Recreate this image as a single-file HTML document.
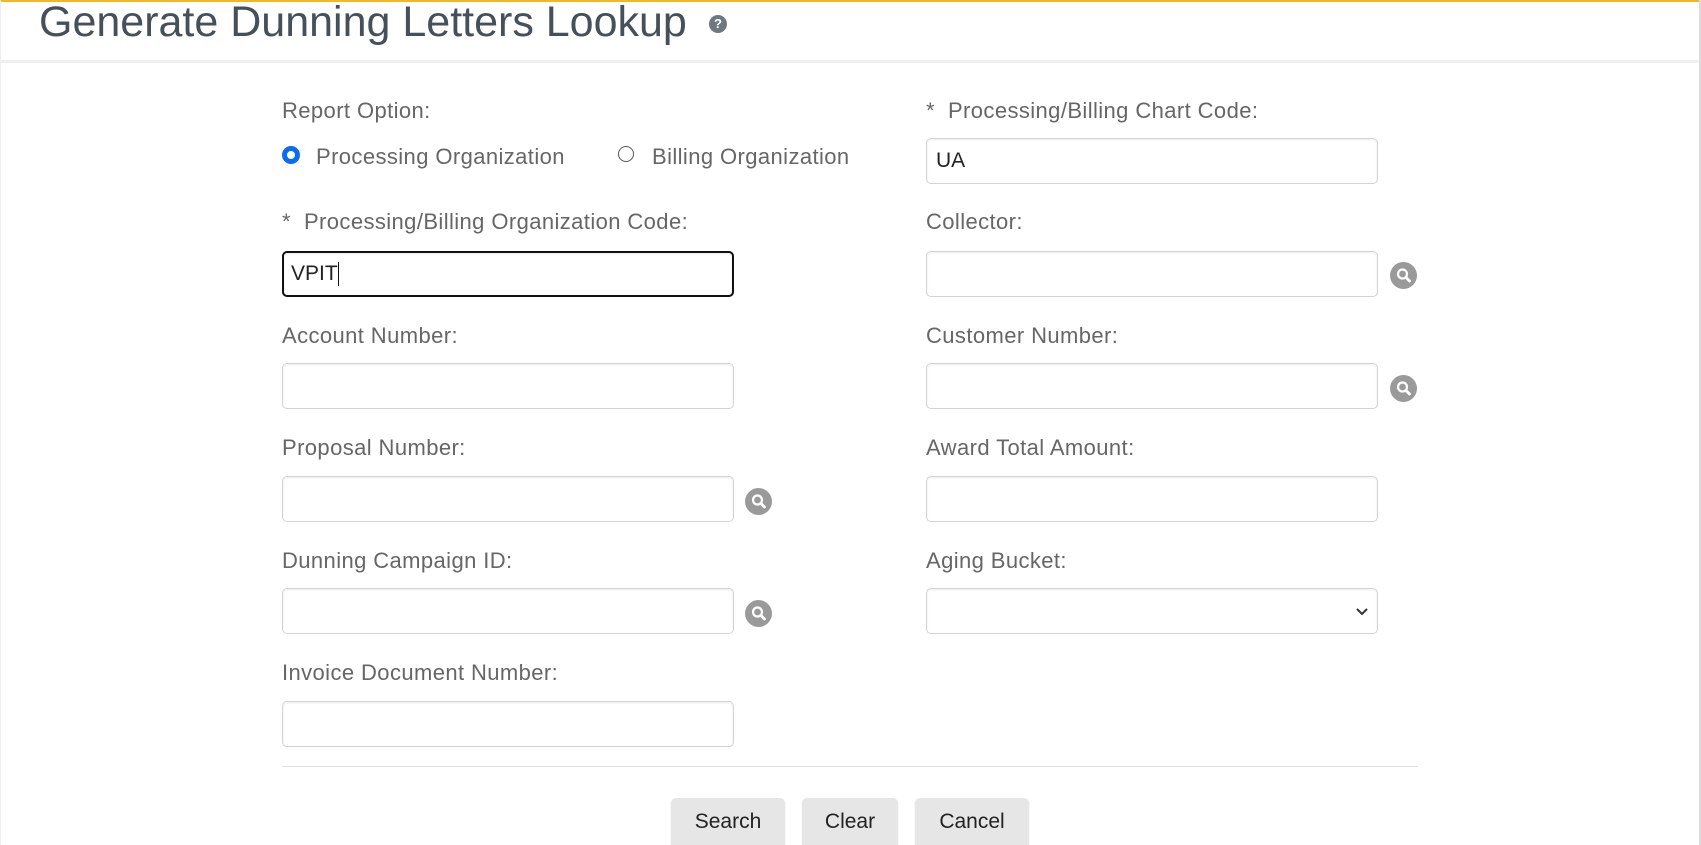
<!DOCTYPE html>
<html><head><meta charset="utf-8"><style>
html,body{margin:0;padding:0;background:#fff;width:1701px;height:845px;overflow:hidden;position:relative;font-family:"Liberation Sans",Arial,sans-serif;}
.topbar{position:absolute;left:0;top:0;width:1701px;height:2px;background:#f0b823;}
.rb{position:absolute;right:0;top:0;width:2px;height:845px;background:#dcdcdc;}
.lb{position:absolute;left:0;top:0;width:1px;height:845px;background:#eee;}
.hdrline{position:absolute;left:0;top:60px;width:1699px;height:3px;background:#f0f0f0;}
h1{position:absolute;left:39px;top:-2px;margin:0;font-weight:normal;font-size:43px;color:#46505a;letter-spacing:0;}
.help{position:absolute;left:709px;top:15px;width:18px;height:18px;border-radius:50%;background:#6f7780;color:#fff;font-size:13px;font-weight:bold;text-align:center;line-height:18px;}
.lbl{position:absolute;font-size:22px;letter-spacing:0.4px;color:#666;line-height:24px;white-space:nowrap;}
.inp{position:absolute;width:452px;height:46px;border:1px solid #d4d4d4;border-radius:5px;box-sizing:border-box;box-shadow:inset 0 1px 2px rgba(0,0,0,.08);background:#fff;font-size:21px;color:#222;padding-left:9px;line-height:44px;}
.L{left:282px;}.R{left:926px;}
.srch{position:absolute;width:27px;height:27px;border-radius:50%;background:#9a9a9a;}
.radio{position:absolute;width:16px;height:16px;border-radius:50%;box-sizing:border-box;}
.btn{position:absolute;top:798px;height:52px;background:#e6e6e6;border-radius:5px;font-size:21px;color:#222;text-align:center;line-height:48px;box-shadow:0 1px 1px rgba(0,0,0,.2);}
</style></head><body>
<div class="topbar"></div><div class="lb"></div><div class="rb"></div>
<h1>Generate Dunning Letters Lookup</h1>
<div class="help">?</div>
<div class="hdrline"></div>

<div class="lbl" style="left:282px;top:99px">Report Option:</div>
<div class="radio" style="left:283px;top:147px;border:4px solid #0b6cf0;background:#fff;box-shadow:0 0 0 1px #0b6cf0"></div>
<div class="lbl" style="left:316px;top:145px">Processing Organization</div>
<div class="radio" style="left:618px;top:146px;border:1.5px solid #555;background:#fff"></div>
<div class="lbl" style="left:652px;top:145px">Billing Organization</div>

<div class="lbl" style="left:926px;top:99px">*&nbsp; Processing/Billing Chart Code:</div>
<div class="inp R" style="top:138px">UA</div>

<div class="lbl" style="left:282px;top:210px">*&nbsp; Processing/Billing Organization Code:</div>
<div class="inp L" style="top:251px;border:2px solid #111;padding-left:7px;line-height:42px">VPIT<span style="display:inline-block;width:1px;height:24px;background:#111;vertical-align:middle"></span></div>
<div class="lbl" style="left:926px;top:210px">Collector:</div>
<div class="inp R" style="top:251px"></div>

<div class="lbl" style="left:282px;top:324px">Account Number:</div>
<div class="inp L" style="top:363px"></div>
<div class="lbl" style="left:926px;top:324px">Customer Number:</div>
<div class="inp R" style="top:363px"></div>

<div class="lbl" style="left:282px;top:436px">Proposal Number:</div>
<div class="inp L" style="top:476px"></div>
<div class="lbl" style="left:926px;top:436px">Award Total Amount:</div>
<div class="inp R" style="top:476px"></div>

<div class="lbl" style="left:282px;top:549px">Dunning Campaign ID:</div>
<div class="inp L" style="top:588px"></div>
<div class="lbl" style="left:926px;top:549px">Aging Bucket:</div>
<div class="inp R" style="top:588px"><svg style="position:absolute;right:8px;top:18px" width="14" height="10" viewBox="0 0 14 10"><path d="M2 2 L7 7 L12 2" fill="none" stroke="#333" stroke-width="2"/></svg></div>

<div class="lbl" style="left:282px;top:661px">Invoice Document Number:</div>
<div class="inp L" style="top:701px"></div>

<svg width="0" height="0" style="position:absolute"><defs><g id="mg"><circle cx="12.5" cy="12" r="4.5" fill="none" stroke="#fff" stroke-width="2.2"/><path d="M16 15.5 L19.5 19" stroke="#fff" stroke-width="2.8" stroke-linecap="round"/></g></defs></svg>
<svg class="srch" style="left:1390px;top:262px" viewBox="0 0 27 27"><use href="#mg"/></svg>
<svg class="srch" style="left:1390px;top:375px" viewBox="0 0 27 27"><use href="#mg"/></svg>
<svg class="srch" style="left:745px;top:488px" viewBox="0 0 27 27"><use href="#mg"/></svg>
<svg class="srch" style="left:745px;top:600px" viewBox="0 0 27 27"><use href="#mg"/></svg>

<div style="position:absolute;left:282px;top:766px;width:1136px;height:1px;background:#e2e2e2"></div>

<div class="btn" style="left:671px;width:114px">Search</div>
<div class="btn" style="left:802px;width:96px">Clear</div>
<div class="btn" style="left:915px;width:114px">Cancel</div>
</body></html>
